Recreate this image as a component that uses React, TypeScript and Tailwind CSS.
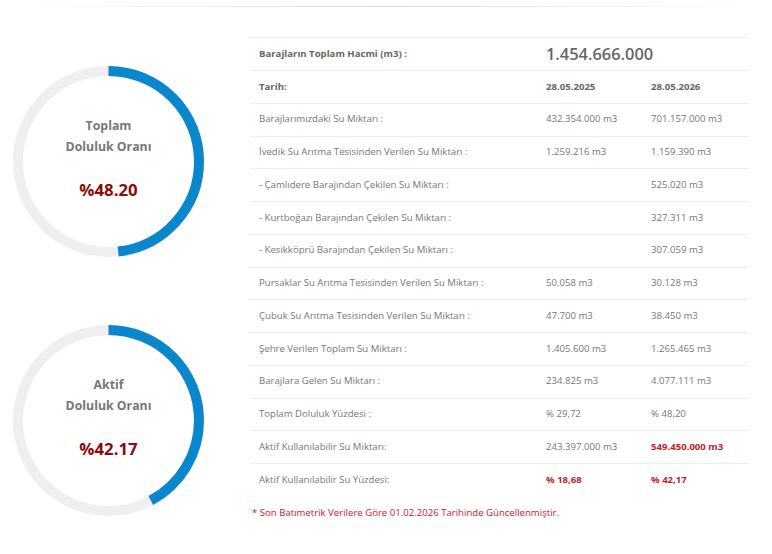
import React from 'react';

type Row = {
  label: string;
  a?: string;
  b?: string;
  head?: boolean;
  redA?: boolean;
  redB?: boolean;
};

const rows: Row[] = [
  { label: 'Tarih:', a: '28.05.2025', b: '28.05.2026', head: true },
  { label: 'Barajlarımızdaki Su Miktarı :', a: '432.354.000 m3', b: '701.157.000 m3' },
  { label: 'İvedik Su Arıtma Tesisinden Verilen Su Miktarı :', a: '1.259.216 m3', b: '1.159.390 m3' },
  { label: '- Çamlıdere Barajından Çekilen Su Miktarı :', b: '525.020 m3' },
  { label: '- Kurtboğazı Barajından Çekilen Su Miktarı :', b: '327.311 m3' },
  { label: '- Kesikköprü Barajından Çekilen Su Miktarı :', b: '307.059 m3' },
  { label: 'Pursaklar Su Arıtma Tesisinden Verilen Su Miktarı :', a: '50.058 m3', b: '30.128 m3' },
  { label: 'Çubuk Su Arıtma Tesisinden Verilen Su Miktarı :', a: '47.700 m3', b: '38.450 m3' },
  { label: 'Şehre Verilen Toplam Su Miktarı :', a: '1.405.600 m3', b: '1.265.465 m3' },
  { label: 'Barajlara Gelen Su Miktarı :', a: '234.825 m3', b: '4.077.111 m3' },
  { label: 'Toplam Doluluk Yüzdesi :', a: '% 29,72', b: '% 48,20' },
  { label: 'Aktif Kullanılabilir Su Miktarı:', a: '243.397.000 m3', b: '549.450.000 m3', redB: true },
  { label: 'Aktif Kullanılabilir Su Yüzdesi:', a: '% 18,68', b: '% 42,17', redA: true, redB: true },
];

const Gauge = ({ title, value }: { title: string; value: number }) => {
  const r = 90.5;
  const c = 2 * Math.PI * r;
  return (
    <div className="relative w-[191px] h-[191px]">
      <svg width="191" height="191" className="absolute inset-0">
        <circle cx="95.5" cy="95.5" r={r} fill="none" stroke="#efefef" strokeWidth="10" />
        <circle
          cx="95.5"
          cy="95.5"
          r={r}
          fill="none"
          stroke="#0a87cc"
          strokeWidth="10"
          strokeDasharray={`${(c * value) / 100} ${c}`}
          transform="rotate(-90 95.5 95.5)"
        />
      </svg>
      <div className="absolute inset-0 flex flex-col items-center pt-[50px] text-[12.3px] font-bold text-[#777]">
        <div className="leading-[20px]">{title}</div>
        <div className="leading-[22px]">Doluluk Oranı</div>
        <div className="mt-[20px] text-[16.8px] leading-[24px] text-[#8b0a0a]">%{value.toFixed(2)}</div>
      </div>
    </div>
  );
};

export default function App() {
  return (
    <div className="w-[772px] h-[554px] bg-white font-['Open_Sans',sans-serif] overflow-hidden">
      {/* header shadow line */}
      <div className="pt-[6px]">
        <div className="h-px mx-[10px] bg-gradient-to-r from-transparent via-[#dcdcdc] to-transparent" />
      </div>

      <div className="flex items-start pt-[30px]">
        {/* gauges */}
        <div className="w-[217px] flex flex-col items-center pt-[29px] gap-[68px]">
          <Gauge title="Toplam" value={48.2} />
          <Gauge title="Aktif" value={42.17} />
        </div>

        {/* table */}
        <div className="ml-[33px] w-[498px]">
          <div className="text-[9.6px] text-[#777]">
            <div className="grid grid-cols-[287px_211px] h-[33px] items-center border-t border-[#ececec]">
              <div className="px-[9px] font-bold text-[#666]">Barajların Toplam Hacmi (m3) :</div>
              <div className="px-[9px] text-[16.4px] font-semibold text-[#666]">1.454.666.000</div>
            </div>
            {rows.map((row) => (
              <div
                key={row.label}
                className="grid grid-cols-[287px_105px_106px] h-[32.75px] items-center border-t border-[#ececec]"
              >
                <div className={`px-[9px] ${row.head ? 'font-bold text-[#666]' : ''}`}>{row.label}</div>
                <div
                  className={`px-[9px] ${row.head ? 'font-bold text-[#666]' : ''} ${
                    row.redA ? 'font-bold text-[#c8202a]' : ''
                  }`}
                >
                  {row.a}
                </div>
                <div
                  className={`px-[9px] ${row.head ? 'font-bold text-[#666]' : ''} ${
                    row.redB ? 'font-bold text-[#c8202a]' : ''
                  }`}
                >
                  {row.b}
                </div>
              </div>
            ))}
          </div>
          <p className="mt-[10px] pl-[2px] text-[9.6px] text-[#d0151f]">
            * Son Batımetrik Verilere Göre 01.02.2026 Tarihinde Güncellenmiştir.
          </p>
        </div>
      </div>
    </div>
  );
}
